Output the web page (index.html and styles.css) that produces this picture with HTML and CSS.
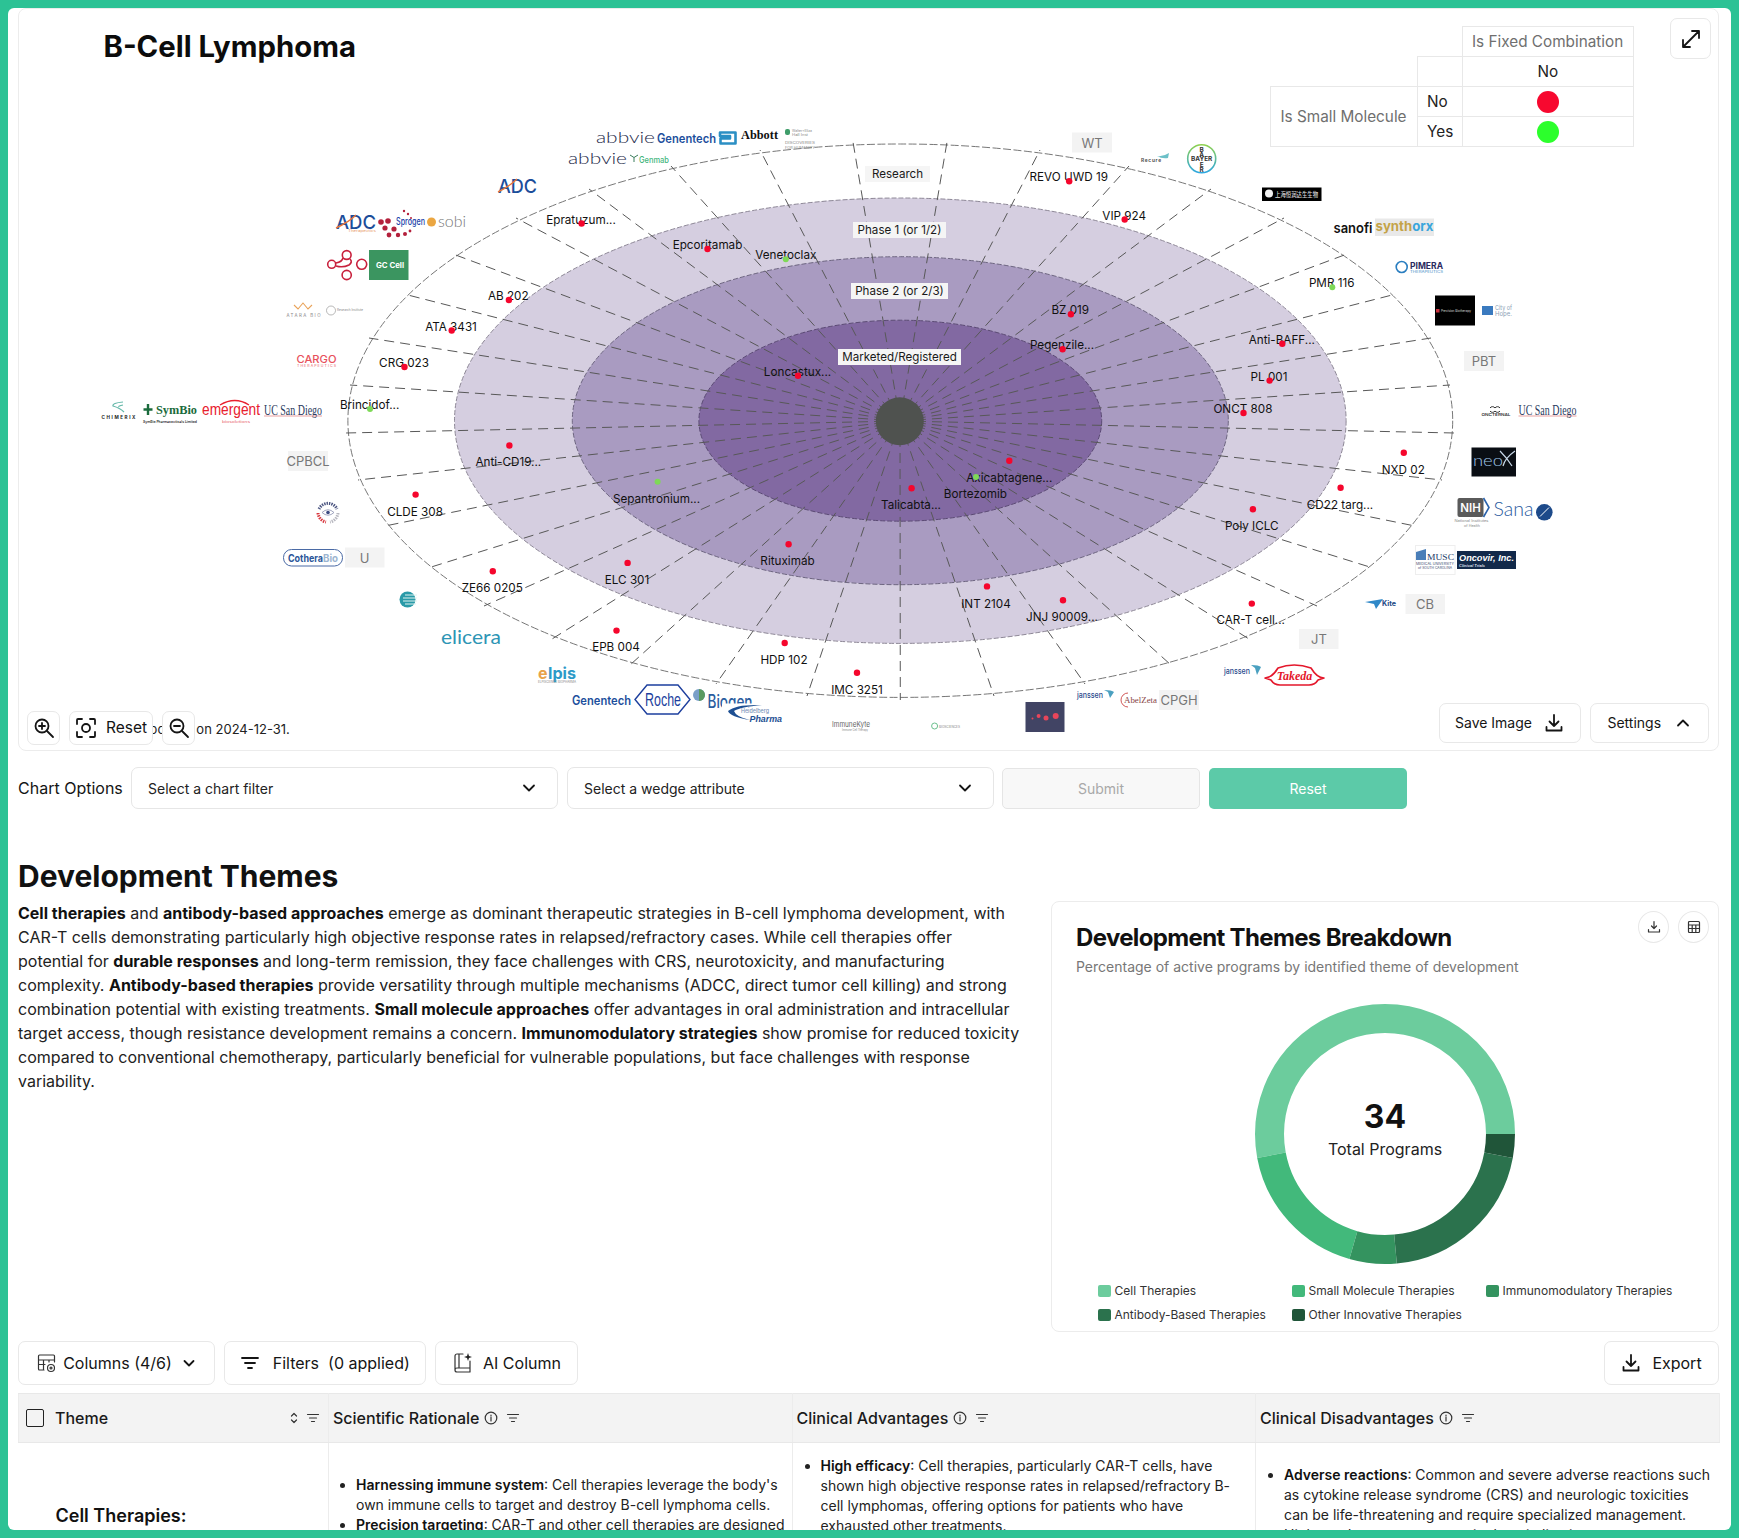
FILE: index.html
```html
<!DOCTYPE html>
<html lang="en">
<head>
<meta charset="utf-8">
<title>B-Cell Lymphoma</title>
<link rel="stylesheet" href="styles.css">
</head>
<body>
<div class="frame">
<main class="main">

<section class="chart-card">
  <svg class="chart" viewBox="19 9 1699 741" width="1699" height="741" xmlns="http://www.w3.org/2000/svg">
    <defs>
      <linearGradient id="bayer" x1="0" y1="0" x2="0" y2="1"><stop offset="0" stop-color="#8fd14f"/><stop offset="1" stop-color="#2ea7e0"/></linearGradient>
    </defs>
    <text class="title" x="103.5" y="57">B-Cell Lymphoma</text>

    <ellipse class="ring ring-r" cx="900.3" cy="420.7" rx="552.4" ry="276.7"/>
    <ellipse class="ring ring-1" cx="900.3" cy="420.7" rx="445.8" ry="222.7"/>
    <ellipse class="ring ring-2" cx="900.3" cy="420.7" rx="328" ry="164"/>
    <ellipse class="ring ring-3" cx="900.3" cy="420.7" rx="201.4" ry="100.5"/>
    <path class="spokes" d="M900 421L900.3 700M900 421L807 696M900 421L716 684M900 421L630 665M900 421L552 639M900 421L484 606M900 421L428 568M900 421L385 526M900 421L358 480M900 421L346 433M900 421L350 385M900 421L369 338M900 421L404 294M900 421L453 254M900 421L516 218M900 421L589 189M900 421L671 166M900 421L760 150M900 421L853 142M900 421L947 142M900 421L1040 150M900 421L1129 166M900 421L1211 189M900 421L1284 218M900 421L1347 254M900 421L1396 294M900 421L1431 338M900 421L1450 385M900 421L1454 433M900 421L1442 480M900 421L1415 526M900 421L1373 568M900 421L1317 606M900 421L1249 639M900 421L1171 665M900 421L1085 684M900 421L994 696"/>
    <circle class="hub" cx="899.8" cy="421.3" r="24"/>

    <rect class="stage-bg" x="865" y="166" width="65" height="16"/>
    <text class="stage" x="897.5" y="174">Research</text>
    <rect class="stage-bg" x="853" y="222" width="93" height="16"/>
    <text class="stage" x="899.5" y="230">Phase 1 (or 1/2)</text>
    <rect class="stage-bg" x="851" y="283" width="97" height="16"/>
    <text class="stage" x="899.5" y="291">Phase 2 (or 2/3)</text>
    <rect class="stage-bg" x="838" y="349" width="123" height="16"/>
    <text class="stage" x="899.5" y="357">Marketed/Registered</text>

    <g class="wedges">
      <text x="581" y="219.5">Epratuzum...</text>
      <text x="707.5" y="244.6">Epcoritamab</text>
      <text x="785.8" y="255">Venetoclax</text>
      <text x="508.3" y="296">AB 202</text>
      <text x="451" y="326.6">ATA 3431</text>
      <text x="404" y="363">CRG 023</text>
      <text x="797.5" y="371.8">Loncastux...</text>
      <text x="369.6" y="405.2">Brincidof...</text>
      <text x="508.3" y="462">Anti-CD19...</text>
      <text x="656.5" y="498.5">Sepantronium...</text>
      <text x="415" y="511.8">CLDE 308</text>
      <text x="627" y="579.6">ELC 301</text>
      <text x="492.2" y="588.4">ZE66 0205</text>
      <text x="787.5" y="561.4">Rituximab</text>
      <text x="616" y="647.4">EPB 004</text>
      <text x="784" y="659.6">HDP 102</text>
      <text x="857" y="690">IMC 3251</text>
      <text x="1068.7" y="177.3">REVO UWD 19</text>
      <text x="1124.2" y="215.6">VIP 924</text>
      <text x="1331.7" y="283.4">PMR 116</text>
      <text x="1070.3" y="310.4">BZ 019</text>
      <text x="1062" y="345.3">Pegenzile...</text>
      <text x="1281.8" y="339.9">Anti-BAFF...</text>
      <text x="1269" y="376.7">PL 001</text>
      <text x="1242.9" y="409.1">ONCT 808</text>
      <text x="1403.3" y="469.5">NXD 02</text>
      <text x="1340" y="504.9">CD22 targ...</text>
      <text x="1251.8" y="526">Poly ICLC</text>
      <text x="1250.7" y="620.3">CAR-T cell...</text>
      <text x="1062" y="617.4">JNJ 90009...</text>
      <text x="986" y="603.6">INT 2104</text>
      <text x="1009.3" y="477.9">Axicabtagene...</text>
      <text x="975.4" y="493.6">Bortezomib</text>
      <text x="911" y="505.4">Talicabta...</text>
    </g>
    <g class="dots-red">
      <circle cx="581.6" cy="223.5" r="3.2"/><circle cx="707.5" cy="249" r="3.2"/><circle cx="508.9" cy="300" r="3.2"/><circle cx="451.7" cy="330.5" r="3.2"/><circle cx="404.5" cy="367" r="3.2"/><circle cx="798" cy="375.7" r="3.2"/><circle cx="509.4" cy="445.5" r="3.2"/><circle cx="415.6" cy="494.6" r="3.2"/><circle cx="627.6" cy="562.9" r="3.2"/><circle cx="492.8" cy="571.2" r="3.2"/><circle cx="788.6" cy="544.2" r="3.2"/><circle cx="616.5" cy="630.6" r="3.2"/><circle cx="784.7" cy="643" r="3.2"/><circle cx="857" cy="672.7" r="3.2"/><circle cx="1069.2" cy="181.2" r="3.2"/><circle cx="1124.7" cy="219.5" r="3.2"/><circle cx="1070.9" cy="314.3" r="3.2"/><circle cx="1062.6" cy="349.2" r="3.2"/><circle cx="1282.3" cy="343.8" r="3.2"/><circle cx="1269.6" cy="380.6" r="3.2"/><circle cx="1243.5" cy="413" r="3.2"/><circle cx="1403.8" cy="452.8" r="3.2"/><circle cx="1340.6" cy="487.7" r="3.2"/><circle cx="1252.9" cy="509.3" r="3.2"/><circle cx="1251.8" cy="603.6" r="3.2"/><circle cx="1063" cy="600.2" r="3.2"/><circle cx="987" cy="586.4" r="3.2"/><circle cx="1009.3" cy="460.7" r="3.2"/><circle cx="911.6" cy="488.2" r="3.2"/>
    </g>
    <g class="dots-green">
      <circle cx="785.8" cy="259.3" r="3"/><circle cx="370" cy="409" r="3"/><circle cx="657.6" cy="481.8" r="3"/><circle cx="1332.3" cy="287.3" r="3"/><circle cx="976" cy="476.9" r="3"/>
    </g>

    <!-- company tags -->
    <g class="tags">
      <rect x="1072" y="132.5" width="40" height="20"/><text x="1092" y="142.5">WT</text>
      <rect x="1464" y="351" width="40" height="20"/><text x="1484" y="361">PBT</text>
      <rect x="1405.5" y="594" width="39.5" height="20"/><text x="1425" y="604">CB</text>
      <rect x="1299" y="629" width="39.5" height="20"/><text x="1319" y="639">JT</text>
      <rect x="1159" y="690" width="40" height="20"/><text x="1179" y="700">CPGH</text>
      <rect x="288" y="451" width="40" height="20"/><text x="308" y="461">CPBCL</text>
      <rect x="345" y="547.5" width="39.5" height="20"/><text x="364.5" y="557.5">U</text>
    </g>

    <!-- logos, top -->
    <text class="lg abbvie" x="596" y="143" textLength="59" lengthAdjust="spacingAndGlyphs">abbvie</text>
    <text class="lg gene" x="657" y="142.5" textLength="59" lengthAdjust="spacingAndGlyphs">Genentech</text>
    <path class="abbott-mark" d="M720 132.5H735.5V143.5H720.5V138.5H730V136H720Z"/>
    <text class="lg abbott" x="741" y="138.5" textLength="37" lengthAdjust="spacingAndGlyphs">Abbott</text>
    <rect class="wehi-shield" x="785" y="129" width="5" height="6" rx="2"/>
    <text class="lg tiny grey" x="792" y="132" textLength="20" lengthAdjust="spacingAndGlyphs">Walter+Eliza</text>
    <text class="lg tiny grey" x="792" y="136" textLength="16" lengthAdjust="spacingAndGlyphs">Hall Inst</text>
    <text class="lg tiny grey" x="785" y="144" textLength="30" lengthAdjust="spacingAndGlyphs">DISCOVERIES</text>
    <text class="lg tiny grey" x="785" y="149" textLength="30" lengthAdjust="spacingAndGlyphs">FOR HUMANITY</text>
    <text class="lg abbvie" x="568" y="164" textLength="59" lengthAdjust="spacingAndGlyphs">abbvie</text>
    <path class="genmab-y" d="M630 155L634 157.5L638 155M634 157.5V162"/>
    <text class="lg genmab" x="639" y="163" textLength="30" lengthAdjust="spacingAndGlyphs">Genmab</text>

    <text class="lg adc" x="498" y="193" textLength="39" lengthAdjust="spacingAndGlyphs">ADC</text>
    <path class="swoosh-o" d="M498 192Q510 186 517 179"/>
    <text class="lg adc" x="336" y="229" textLength="40" lengthAdjust="spacingAndGlyphs">ADC</text>
    <path class="swoosh-o" d="M336 228Q349 222 356 215"/>
    <text class="lg tiny orange" x="348" y="232" textLength="28" lengthAdjust="spacingAndGlyphs">Therapeutics</text>

    <g class="red-dots-logo">
      <circle cx="381" cy="222" r="2.8"/><circle cx="388" cy="221" r="2.8"/><circle cx="385" cy="228" r="2.6"/><circle cx="394" cy="229" r="2.6"/><circle cx="389" cy="235" r="2.4"/><circle cx="398" cy="235" r="2.2"/><circle cx="405" cy="234" r="2"/><circle cx="410" cy="231" r="1.4"/><circle cx="404" cy="211" r="1.2"/><circle cx="408" cy="214" r="1.2"/><circle cx="411" cy="218" r="1"/>
    </g>
    <text class="lg sprogen" x="396" y="224.5" textLength="29" lengthAdjust="spacingAndGlyphs">Sprogen</text>
    <circle class="sobi-dot" cx="431.5" cy="222" r="4.5"/>
    <text class="lg sobi" x="438" y="227" textLength="28" lengthAdjust="spacingAndGlyphs">sobi</text>

    <g class="knot">
      <circle cx="361.7" cy="264.3" r="5"/><circle cx="346.7" cy="275" r="4.6"/><circle cx="346.7" cy="255" r="4.4"/><circle cx="331.7" cy="264.3" r="4"/><path d="M336 263Q342 262 343 258M336 266Q343 268 349 265Q353 262 350 259"/>
    </g>
    <rect class="gc-box" x="369" y="250" width="39.5" height="30"/>
    <text class="lg gc" x="390" y="268">GC Cell</text>

    <path class="atara" d="M294 305L298 309L303 303L308 309L312 305"/>
    <text class="lg tiny grey wide" x="286.5" y="316.5" textLength="34">ATARA BIO</text>
    <circle class="thin-circle" cx="331" cy="310.5" r="4.5"/>
    <text class="lg tiny grey" x="337" y="311" textLength="26" lengthAdjust="spacingAndGlyphs">Research Institute</text>
    <text class="lg cargo" x="296.5" y="363" textLength="40" lengthAdjust="spacingAndGlyphs">CARGO</text>
    <text class="lg tiny orange-red" x="297" y="366.5" textLength="39">THERAPEUTICS</text>

    <path class="chimerix-s" d="M123 402Q112 403 113 406Q120 408 124 412M123 405Q118 406 119 407"/>
    <text class="lg chimerix" x="101.5" y="419" textLength="34">CHIMERIX</text>
    <path class="symbio-mark" d="M148 404V415M143.5 409.5H152.5"/>
    <text class="lg symbio" x="156" y="414" textLength="41" lengthAdjust="spacingAndGlyphs">SymBio</text>
    <text class="lg tiny dark" x="143" y="423" textLength="54" lengthAdjust="spacingAndGlyphs">SymBio Pharmaceuticals Limited</text>
    <text class="lg emergent" x="202" y="415" textLength="58" lengthAdjust="spacingAndGlyphs">emergent</text>
    <path class="emergent-arc" d="M220 405Q235 396 249 405"/>
    <text class="lg tiny orange-red" x="222" y="423" textLength="28" lengthAdjust="spacingAndGlyphs">biosolutions</text>
    <text class="lg ucsd" x="264" y="415" textLength="58" lengthAdjust="spacingAndGlyphs">UC San Diego</text>
    <path class="ucsd-line" d="M264 416H322"/>

    <g class="eye">
      <path class="eye-top" d="M319 509A10 10 0 0 1 337 509"/>
      <path class="eye-left" d="M318 513A10 10 0 0 0 326 522"/>
      <path class="eye-right" d="M338 513A10 10 0 0 1 330 522"/>
      <path class="eye-lid" d="M322 512.5Q328 507 334 512.5Q328 518 322 512.5Z"/>
      <circle class="eye-in" cx="328" cy="512.5" r="1.8"/>
    </g>
    <rect class="cothera-pill" x="283.5" y="549.5" width="59" height="16.5" rx="8"/>
    <text class="lg cothera" x="288" y="561.5" textLength="35" lengthAdjust="spacingAndGlyphs">Cothera</text>
    <text class="lg cothera-b" x="323" y="561.5" textLength="15" lengthAdjust="spacingAndGlyphs">Bio</text>

    <circle class="teal-ball" cx="407.5" cy="599.5" r="8"/>
    <path class="teal-lines" d="M405 595H417M403 598H417M403 601H417M405 604H416"/>
    <text class="lg elicera" x="441" y="643.5" textLength="60" lengthAdjust="spacingAndGlyphs">elicera</text>
    <text class="lg elpis-e" x="538" y="678.5">e</text>
    <text class="lg elpis" x="548" y="678.5" textLength="28" lengthAdjust="spacingAndGlyphs">lpis</text>
    <text class="lg tiny grey" x="538" y="682.5" textLength="38" lengthAdjust="spacingAndGlyphs">ELPISCIENCE BIOPHARMA</text>

    <text class="lg gene" x="572" y="704.5" textLength="59" lengthAdjust="spacingAndGlyphs">Genentech</text>
    <path class="roche-hex" d="M635 699.5L647 685H678L690 699.5L678 714H647Z"/>
    <text class="lg roche" x="645" y="706" textLength="36" lengthAdjust="spacingAndGlyphs">Roche</text>
    <circle class="biogen-globe" cx="699" cy="695" r="6"/>
    <path class="biogen-in" d="M699 689a6 6 0 0 1 0 12z"/>
    <text class="lg biogen" x="707.5" y="708" textLength="45" lengthAdjust="spacingAndGlyphs">Biogen</text>
    <rect class="mask" x="722" y="703.5" width="62" height="22"/>
    <path class="hp-swoosh" d="M762 705Q736 704 728 711Q730 717 750 720Q736 717 734 711Q740 707 762 705Z"/>
    <text class="lg hp-top" x="741" y="713" textLength="28" lengthAdjust="spacingAndGlyphs">Heidelberg</text>
    <text class="lg hp" x="749.5" y="721.5" textLength="32.5" lengthAdjust="spacingAndGlyphs">Pharma</text>
    <text class="lg immune" x="832" y="727" textLength="38" lengthAdjust="spacingAndGlyphs">ImmuneKyte</text>
    <text class="lg tiny grey" x="842" y="731" textLength="26" lengthAdjust="spacingAndGlyphs">Immune Cell Therapy</text>
    <circle class="mini-ring" cx="934.6" cy="726" r="3"/>
    <text class="lg tiny grey" x="939" y="727.5" textLength="21" lengthAdjust="spacingAndGlyphs">BIOSCIENCES</text>
    <rect class="navy-box" x="1025.5" y="702" width="39" height="30"/>
    <g class="navy-dots"><circle cx="1032.5" cy="718.5" r="1"/><circle cx="1038.6" cy="716" r="2"/><circle cx="1046" cy="718" r="2.5"/><circle cx="1055.7" cy="716" r="3"/></g>
    <text class="lg janssen" x="1077" y="698" textLength="26" lengthAdjust="spacingAndGlyphs">janssen</text>
    <path class="jan-swoosh" d="M1104 690Q1112 690 1114 692L1110 698L1108 692Z"/>
    <path class="abel-arc" d="M1128 693A7 7 0 1 0 1128 707"/>
    <text class="lg abel" x="1124" y="703" textLength="33" lengthAdjust="spacingAndGlyphs">AbelZeta</text>
    <text class="lg janssen" x="1224" y="674" textLength="26" lengthAdjust="spacingAndGlyphs">janssen</text>
    <path class="jan-swoosh" d="M1251 665Q1259 665 1261 667L1257 675L1255 668Z"/>
    <path class="takeda-shape" d="M1265 678Q1272 678 1278 668Q1294 662 1311 668Q1317 678 1324 678L1318 680Q1315 685 1309 685H1280Q1274 685 1271 680Z"/>
    <text class="lg takeda" x="1294.5" y="680">Takeda</text>

    <path class="kite-wing" d="M1365 602L1383 599L1376 609L1374 604Z"/>
    <text class="lg kite" x="1382" y="606" textLength="14" lengthAdjust="spacingAndGlyphs">Kite</text>
    <rect class="musc-box" x="1415.5" y="545.5" width="39.5" height="29"/>
    <path class="musc-bld" d="M1416 552L1426 549V560H1416Z"/>
    <text class="lg musc" x="1427" y="560" textLength="27" lengthAdjust="spacingAndGlyphs">MUSC</text>
    <text class="lg tiny navy" x="1416" y="565" textLength="38" lengthAdjust="spacingAndGlyphs">MEDICAL UNIVERSITY</text>
    <text class="lg tiny navy" x="1418" y="569" textLength="34" lengthAdjust="spacingAndGlyphs">of SOUTH CAROLINA</text>
    <rect class="oncovir-box" x="1457" y="551" width="59" height="18"/>
    <text class="lg oncovir" x="1459" y="560.5" textLength="55" lengthAdjust="spacingAndGlyphs">Oncovir, Inc.</text>
    <text class="lg oncovir-s" x="1459" y="566.5" textLength="26" lengthAdjust="spacingAndGlyphs">Clinical Trials</text>

    <rect class="nih-box" x="1457.5" y="498" width="26" height="19" rx="2"/>
    <path class="nih-chev" d="M1483.5 498L1489 507.5L1483.5 517"/>
    <text class="lg nih" x="1470.5" y="512">NIH</text>
    <text class="lg tiny grey" x="1454.5" y="522" textLength="34" lengthAdjust="spacingAndGlyphs">National Institutes</text>
    <text class="lg tiny grey" x="1464" y="527" textLength="16" lengthAdjust="spacingAndGlyphs">of Health</text>
    <text class="lg sana" x="1493.5" y="516" textLength="40" lengthAdjust="spacingAndGlyphs">Sana</text>
    <circle class="sana-dot" cx="1544.3" cy="512.3" r="8.3"/>
    <path class="sana-needle" d="M1549 507.5L1540 516.5"/>
    <rect class="neox-box" x="1471.5" y="447.5" width="44.5" height="29"/>
    <text class="lg neox" x="1473" y="466" textLength="30" lengthAdjust="spacingAndGlyphs">neo</text>
    <path class="neox-x" d="M1500 451Q1507 458 1512 466M1515 451Q1505 458 1503 466"/>

    <path class="oct-loop" d="M1490 408a3 3 0 0 1 5 0a3 3 0 0 1 5 0M1490 411a3 3 0 0 0 5 0a3 3 0 0 0 5 0"/>
    <text class="lg tiny dark" x="1481.5" y="416" textLength="29" lengthAdjust="spacingAndGlyphs">ONCTERNAL</text>
    <text class="lg ucsd" x="1518.5" y="415" textLength="58" lengthAdjust="spacingAndGlyphs">UC San Diego</text>
    <path class="ucsd-line" d="M1518.5 416H1576.5"/>

    <rect class="cit-box" x="1482" y="306" width="11" height="9"/>
    <text class="lg city" x="1495" y="310" textLength="17" lengthAdjust="spacingAndGlyphs">City of</text>
    <text class="lg city" x="1495" y="315.5" textLength="17" lengthAdjust="spacingAndGlyphs">Hope.</text>
    <rect class="black-box" x="1435" y="295.5" width="40" height="30"/>
    <rect class="red-sq" x="1436" y="309" width="3.5" height="3.5"/>
    <text class="lg tiny white" x="1441" y="312" textLength="30" lengthAdjust="spacingAndGlyphs">Precision Biotherapy</text>

    <circle class="pim-ring" cx="1401.7" cy="267" r="5.5"/>
    <text class="lg pimera" x="1410" y="269" textLength="33" lengthAdjust="spacingAndGlyphs">PIMERA</text>
    <text class="lg tiny blue" x="1410" y="273" textLength="33" lengthAdjust="spacingAndGlyphs">THERAPEUTICS</text>
    <text class="lg sanofi" x="1333.5" y="232.5" textLength="39" lengthAdjust="spacingAndGlyphs">sanofi</text>
    <rect class="syn-box" x="1375" y="218.5" width="59" height="17.5"/>
    <text class="lg synth" x="1375.5" y="231" textLength="58" lengthAdjust="spacingAndGlyphs">synth<tspan class="syn-b">orx</tspan></text>

    <rect class="black-box" x="1262" y="187.5" width="59.5" height="13.5"/>
    <circle class="white-dot" cx="1269" cy="193.5" r="4"/>
    <text class="lg cjk" x="1275" y="197" textLength="43" lengthAdjust="spacingAndGlyphs">上海恒润达生生物</text>

    <circle class="bayer-ring" cx="1201.7" cy="158.7" r="14"/>
    <text class="lg bayer" x="1201.7" y="161.2">BAYER</text>
    <text class="lg bayer" x="1201.7" y="151.5">B</text>
    <text class="lg bayer" x="1201.7" y="156.5">A</text>
    <text class="lg bayer" x="1201.7" y="166.5">E</text>
    <text class="lg bayer" x="1201.7" y="171.8">R</text>
    <text class="lg recure" x="1141" y="161.5" textLength="20">Recure</text>
    <path class="rec-sw" d="M1157 156Q1163 157 1169 153L1168 158Q1162 159 1157 156Z"/>
  </svg>

  <table class="legend">
    <colgroup><col class="legend-c1"><col class="legend-c2"><col class="legend-c3"></colgroup>
    <tr><td class="blank" colspan="2"></td><th class="muted">Is Fixed Combination</th></tr>
    <tr><td class="blank"></td><td></td><td class="center">No</td></tr>
    <tr><th class="muted" rowspan="2">Is Small Molecule</th><td>No</td><td class="center"><span class="legend-dot red"></span></td></tr>
    <tr><td>Yes</td><td class="center"><span class="legend-dot green"></span></td></tr>
  </table>

  <button class="btn expand" aria-label="Expand">
    <svg width="24" height="24" viewBox="0 0 24 24" class="ic"><path d="M4 20L20 4M13 4H20V11M4 13V20H11"/></svg>
  </button>

  <p class="source">Data procured on 2024-12-31.</p>
  <div class="zoom-controls">
    <button class="btn zoom-btn" aria-label="Zoom in"><svg width="22" height="22" viewBox="0 0 22 22" class="ic"><circle cx="9" cy="9" r="6.5"/><path d="M14 14L20 20M9 6V12M6 9H12"/></svg></button>
    <button class="btn reset-btn"><svg width="22" height="22" viewBox="0 0 22 22" class="ic"><path d="M2 7V3a1 1 0 0 1 1-1H7M15 2H19a1 1 0 0 1 1 1V7M20 15V19a1 1 0 0 1-1 1H15M7 20H3a1 1 0 0 1-1-1V15"/><circle cx="11" cy="11" r="4"/></svg>Reset</button>
    <button class="btn zoom-btn" aria-label="Zoom out"><svg width="22" height="22" viewBox="0 0 22 22" class="ic"><circle cx="9" cy="9" r="6.5"/><path d="M14 14L20 20M6 9H12"/></svg></button>
  </div>
  <div class="chart-actions">
    <button class="btn action save">Save Image<svg width="20" height="20" viewBox="0 0 20 20" class="ic"><path d="M10 2V13M5.5 8.5L10 13L14.5 8.5M2.5 14V17.5H17.5V14"/></svg></button>
    <button class="btn action settings">Settings<svg width="16" height="16" viewBox="0 0 16 16" class="ic"><path d="M3 10.5L8 5.5L13 10.5"/></svg></button>
  </div>
</section>

<section class="options">
  <span class="options-label">Chart Options</span>
  <div class="select"><span>Select a chart filter</span><svg width="16" height="16" viewBox="0 0 16 16" class="ic"><path d="M3 5.5L8 10.5L13 5.5"/></svg></div>
  <div class="select"><span>Select a wedge attribute</span><svg width="16" height="16" viewBox="0 0 16 16" class="ic"><path d="M3 5.5L8 10.5L13 5.5"/></svg></div>
  <button class="opt-btn submit">Submit</button>
  <button class="opt-btn apply">Reset</button>
</section>

<h1 class="section-title">Development Themes</h1>

<section class="themes">
  <p class="themes-text"><b>Cell therapies</b> and <b>antibody-based approaches</b> emerge as dominant therapeutic strategies in B-cell lymphoma development, with CAR-T cells demonstrating particularly high objective response rates in relapsed/refractory cases. While cell therapies offer potential for <b>durable responses</b> and long-term remission, they face challenges with CRS, neurotoxicity, and manufacturing complexity. <b>Antibody-based therapies</b> provide versatility through multiple mechanisms (ADCC, direct tumor cell killing) and strong combination potential with existing treatments. <b>Small molecule approaches</b> offer advantages in oral administration and intracellular target access, though resistance development remains a concern. <b>Immunomodulatory strategies</b> show promise for reduced toxicity compared to conventional chemotherapy, particularly beneficial for vulnerable populations, but face challenges with response variability.</p>

  <aside class="breakdown">
    <div class="round-actions">
      <button class="round" aria-label="Download"><svg width="14" height="14" viewBox="0 0 14 14" class="ic thin"><path d="M7 1.5V8.5M4.5 6L7 8.5L9.5 6M1.5 9.5V12H12.5V9.5"/></svg></button>
      <button class="round" aria-label="Table"><svg width="14" height="14" viewBox="0 0 14 14" class="ic thin"><rect x="1.5" y="1.5" width="11" height="11" rx="1"/><path d="M1.5 5H12.5M1.5 8.5H12.5M5.2 5V12.5M8.8 5V12.5"/></svg></button>
    </div>
    <h2 class="breakdown-title">Development Themes Breakdown</h2>
    <p class="breakdown-sub">Percentage of active programs by identified theme of development</p>
    <div class="donut">
      <svg width="260" height="260" viewBox="-130 -130 260 260" xmlns="http://www.w3.org/2000/svg">
        <g transform="scale(1,-1)" fill="none" stroke-width="29">
          <circle r="115.5" pathLength="34" stroke="#6ccc9d" stroke-dasharray="18 16"/>
          <circle r="115.5" pathLength="34" stroke="#42b97b" stroke-dasharray="6 28" stroke-dashoffset="-18"/>
          <circle r="115.5" pathLength="34" stroke="#34935f" stroke-dasharray="2 32" stroke-dashoffset="-24"/>
          <circle r="115.5" pathLength="34" stroke="#2b724d" stroke-dasharray="7 27" stroke-dashoffset="-26"/>
          <circle r="115.5" pathLength="34" stroke="#205539" stroke-dasharray="1 33" stroke-dashoffset="-33"/>
        </g>
      </svg>
      <div class="donut-center"><strong>34</strong><span>Total Programs</span></div>
    </div>
    <ul class="donut-legend">
      <li><i class="sw sw1"></i>Cell Therapies</li>
      <li><i class="sw sw2"></i>Small Molecule Therapies</li>
      <li><i class="sw sw3"></i>Immunomodulatory Therapies</li>
      <li><i class="sw sw4"></i>Antibody-Based Therapies</li>
      <li><i class="sw sw5"></i>Other Innovative Therapies</li>
    </ul>
  </aside>
</section>

<section class="toolbar">
  <button class="btn tool w-col"><svg width="22" height="22" viewBox="0 0 22 22" class="ic thin"><path d="M8 18H3.5a1 1 0 0 1-1-1V4a1 1 0 0 1 1-1h14a1 1 0 0 1 1 1v6M2.5 8H18.5M2.5 12.5H9M7.5 8V18M13 8V10"/><circle cx="15" cy="16" r="3.5"/><circle cx="15" cy="16" r="1"/></svg>Columns (4/6)<svg class="ic caret" width="16" height="16" viewBox="0 0 16 16"><path d="M3.5 6L8 10.5L12.5 6"/></svg></button>
  <button class="btn tool w-fil"><svg width="20" height="20" viewBox="0 0 20 20" class="ic"><path d="M2 5H18M5 10H15M8 15H12"/></svg>Filters&nbsp; (0 applied)</button>
  <button class="btn tool w-ai"><svg width="22" height="22" viewBox="0 0 22 22" class="ic thin"><path d="M12 2H6a2 2 0 0 0-2 2V18a2 2 0 0 0 2 2H19V9M4 18a2 2 0 0 1 2-2H19M8 2V16"/><path class="fill-k" d="M17 1L18 4L21 5L18 6L17 9L16 6L13 5L16 4Z"/></svg>AI Column</button>
  <span class="tool-spacer"></span>
  <button class="btn tool w-exp"><svg width="20" height="20" viewBox="0 0 20 20" class="ic"><path d="M10 2V13M5.5 8.5L10 13L14.5 8.5M2.5 14V17.5H17.5V14"/></svg>Export</button>
</section>

<table class="data">
  <colgroup><col class="dc1"><col class="dc2"><col class="dc3"><col class="dc4"></colgroup>
  <thead>
    <tr>
      <th><div class="th-in first"><span class="check"></span><span class="th-theme">Theme</span><span class="grow"></span>
        <svg width="10" height="14" viewBox="0 0 10 14" class="ic thin"><path d="M2.5 5L5 2.5L7.5 5M2.5 9L5 11.5L7.5 9"/></svg>
        <svg width="14" height="14" viewBox="0 0 14 14" class="ic thin"><path d="M1.5 3.5H12.5M3.5 7H10.5M5.5 10.5H8.5"/></svg></div></th>
      <th><div class="th-in tight">Scientific Rationale<svg width="14" height="14" viewBox="0 0 14 14" class="ic thin"><circle cx="7" cy="7" r="5.8"/><path d="M7 6.2V10M7 4V4.8"/></svg><svg width="14" height="14" viewBox="0 0 14 14" class="ic thin"><path d="M1.5 3.5H12.5M3.5 7H10.5M5.5 10.5H8.5"/></svg></div></th>
      <th><div class="th-in tight">Clinical Advantages<svg width="14" height="14" viewBox="0 0 14 14" class="ic thin"><circle cx="7" cy="7" r="5.8"/><path d="M7 6.2V10M7 4V4.8"/></svg><svg width="14" height="14" viewBox="0 0 14 14" class="ic thin"><path d="M1.5 3.5H12.5M3.5 7H10.5M5.5 10.5H8.5"/></svg></div></th>
      <th><div class="th-in tight">Clinical Disadvantages<svg width="14" height="14" viewBox="0 0 14 14" class="ic thin"><circle cx="7" cy="7" r="5.8"/><path d="M7 6.2V10M7 4V4.8"/></svg><svg width="14" height="14" viewBox="0 0 14 14" class="ic thin"><path d="M1.5 3.5H12.5M3.5 7H10.5M5.5 10.5H8.5"/></svg></div></th>
    </tr>
  </thead>
  <tbody>
    <tr>
      <td class="theme-cell">Cell Therapies:</td>
      <td class="rationale"><ul>
        <li><b>Harnessing immune system</b>: Cell therapies leverage the body's own immune cells to target and destroy B-cell lymphoma cells.</li>
        <li><b>Precision targeting</b>: CAR-T and other cell therapies are designed to recognise specific antigens.</li>
      </ul></td>
      <td class="advantages"><ul>
        <li><b>High efficacy</b>: Cell therapies, particularly CAR-T cells, have shown high objective response rates in relapsed/refractory B-cell lymphomas, offering options for patients who have exhausted other treatments.</li>
      </ul></td>
      <td class="disadvantages"><ul>
        <li><b>Adverse reactions</b>: Common and severe adverse reactions such as cytokine release syndrome (CRS) and neurologic toxicities can be life-threatening and require specialized management. High-grade events may require hospitalization.</li>
      </ul></td>
    </tr>
  </tbody>
</table>

</main>
</div>
</body>
</html>
```

FILE: styles.css
```css
* { box-sizing: border-box; }
html, body { margin: 0; padding: 0; height: 100%; }
body {
  background: #2cc295;
  padding: 8px;
  overflow: hidden;
  font-family: Inter, "Liberation Sans", sans-serif;
  color: #151515;
}
.frame {
  background: #fff;
  border-radius: 6px;
  height: 1522px;
  overflow: hidden;
}
.main { padding: 0 12px 0 10px; }

/* shared */
.btn {
  font: 400 14px Inter, sans-serif;
  color: #151515;
  background: #fff;
  border: 1px solid #e8e8e8;
  border-radius: 7px;
  display: flex;
  align-items: center;
  justify-content: center;
  padding: 0;
}
.ic { fill: none; stroke: #151515; stroke-width: 1.8; stroke-linecap: round; stroke-linejoin: round; flex: none; }
.ic.thin { stroke-width: 1.2; stroke: #333; }
.fill-k { fill: #222; stroke: none; }

/* chart card */
.chart-card {
  position: relative;
  height: 743px;
  border: 1px solid #ececec;
  border-radius: 8px;
}
.chart { display: block; }
.title { font: 700 29.3px Inter, sans-serif; fill: #0c0c0c; }

.ring { stroke-width: 1; stroke-dasharray: 5 2; }
.ring-r { fill: #fff; stroke: #777; stroke-dasharray: 8 2.5; }
.ring-1 { fill: #d5cee0; stroke: #8d8796; }
.ring-2 { fill: #a99bc1; stroke: #6d6580; }
.ring-3 { fill: #8269a2; stroke: #5b4a74; }
.spokes { fill: none; stroke: #585858; stroke-width: 1; stroke-dasharray: 10 6; stroke-dashoffset: 0; }
.hub { fill: #4f524f; }
.stage-bg { fill: #f5f5f5; }
.stage { font: 400 11.6px Inter, sans-serif; fill: #1a1a1a; text-anchor: middle; dominant-baseline: central; }
.wedges text { font: 400 11.7px Inter, sans-serif; fill: #111; text-anchor: middle; dominant-baseline: central; }
.dots-red circle { fill: #f5062d; }
.dots-green circle { fill: #7ed957; }
.tags rect { fill: #f3f3f3; }
.tags text { font: 400 13px Inter, sans-serif; fill: #777; text-anchor: middle; dominant-baseline: central; }

/* logos */
.lg { font-family: Inter, sans-serif; }
.tiny { font-size: 3.6px; }
.tiny.grey { fill: #888; }
.tiny.dark { fill: #333; font-weight: 600; }
.tiny.orange { fill: #e89a6a; }
.tiny.orange-red { fill: #e8606a; }
.tiny.navy { fill: #3a4a70; }
.tiny.blue { fill: #4a90c8; }
.tiny.white { fill: #ddd; }
.abbvie { font: 300 15px Lato, sans-serif; fill: #1e2a4a; }
.gene { font: 600 12.5px Inter, sans-serif; fill: #1c4f9c; }
.abbott-mark { fill: none; stroke: #2b8fc4; stroke-width: 2.6; stroke-linejoin: round; }
.abbott { font: 700 12.5px "Liberation Serif", serif; fill: #111; }
.wehi-shield { fill: #3f9d6a; }
.genmab-y { fill: none; stroke: #3a7d5c; stroke-width: 1; }
.genmab { font: 500 9px Inter, sans-serif; fill: #3fb57c; }
.adc { font: 500 19px Inter, sans-serif; fill: #1b4d9a; }
.swoosh-o { fill: none; stroke: #e8763a; stroke-width: 1.4; }
.red-dots-logo circle { fill: #b4203c; }
.sprogen { font: 500 10px Inter, sans-serif; fill: #2244aa; }
.sobi-dot { fill: #eba641; }
.sobi { font: 300 16px Lato, sans-serif; fill: #777; }
.knot circle, .knot path { fill: none; stroke: #c8203c; stroke-width: 1.6; }
.gc-box { fill: #3b9560; }
.gc { font: 700 7.8px Inter, sans-serif; fill: #fff; text-anchor: middle; }
.atara { fill: none; stroke: #e9a35a; stroke-width: 1.1; }
.wide { font-size: 4.4px; }
.thin-circle { fill: none; stroke: #999; stroke-width: .7; }
.cargo { font: 500 10.5px Inter, sans-serif; fill: #e8505b; }
.chimerix-s { fill: none; stroke: #63b7a8; stroke-width: 1.2; }
.chimerix { font: 700 4.6px Inter, sans-serif; fill: #222; }
.symbio-mark { fill: none; stroke: #1a6b3c; stroke-width: 2.4; }
.symbio { font: 700 13.5px "Liberation Serif", serif; fill: #1a6b3c; }
.emergent { font: 400 17px "Liberation Sans", sans-serif; fill: #e8202e; }
.emergent-arc { fill: none; stroke: #e8202e; stroke-width: 1.4; }
.ucsd { font: 400 15px "Liberation Serif", serif; fill: #2a3a5e; }
.ucsd-line { fill: none; stroke: #e07a7a; stroke-width: .7; }
.eye path { fill: none; stroke-width: 3; stroke-dasharray: 1.4 1; }
.eye .eye-top { stroke: #4a5480; }
.eye .eye-left { stroke: #d8383f; }
.eye .eye-right { stroke: #b8b8c0; }
.eye .eye-lid { stroke: #8a90b0; stroke-width: .8; stroke-dasharray: none; }
.eye .eye-in { fill: #3a4a80; }
.cothera-pill { fill: #fff; stroke: #4a6aa5; stroke-width: 1; }
.cothera { font: 700 10.5px Inter, sans-serif; fill: #2a5599; }
.cothera-b { font: 700 10.5px Inter, sans-serif; fill: #9db5d0; }
.teal-ball { fill: #2a9aa8; }
.teal-lines { fill: none; stroke: #dff3f0; stroke-width: 1; }
.elicera { font: 400 19px Lato, sans-serif; fill: #2d95b5; }
.elpis-e { font: 700 16px Inter, sans-serif; fill: #e8a24a; }
.elpis { font: 700 16px Inter, sans-serif; fill: #2d9ac8; }
.roche-hex { fill: #fff; stroke: #1d3f9e; stroke-width: 1.4; }
.roche { font: 400 19px "Liberation Sans", sans-serif; fill: #1d3f9e; }
.biogen-globe { fill: #7a9fc8; }
.biogen-in { fill: #5a9a60; }
.biogen { font: 500 18px Inter, sans-serif; fill: #2a5c9e; }
.mask { fill: #fff; }
.hp-swoosh { fill: #1d4f92; }
.hp-top { font: 500 5.5px Inter, sans-serif; fill: #7b93b8; }
.hp { font: italic 700 9.5px "Liberation Sans", sans-serif; fill: #1d4f92; }
.immune { font: 400 7.6px Inter, sans-serif; fill: #666; }
.mini-ring { fill: none; stroke: #6cc08e; stroke-width: 1; }
.navy-box { fill: #414464; }
.navy-dots circle { fill: #e8455a; }
.janssen { font: 500 8.6px Inter, sans-serif; fill: #2a4a8c; }
.jan-swoosh { fill: #4aa0c0; }
.abel-arc { fill: none; stroke: #c44; stroke-width: .9; }
.abel { font: 400 8px "Liberation Serif", serif; fill: #844; }
.takeda-shape { fill: #fff; stroke: #e4172b; stroke-width: 1.6; stroke-linejoin: round; }
.takeda { font: italic 700 12px "Liberation Serif", serif; fill: #e4172b; text-anchor: middle; }
.kite-wing { fill: #2f88c8; }
.kite { font: 700 7px Inter, sans-serif; fill: #234a86; }
.musc-box { fill: #fff; stroke: #eee; stroke-width: 1; }
.musc-bld { fill: #4a7eb8; }
.musc { font: 400 7.5px "Liberation Serif", serif; fill: #223a66; }
.oncovir-box { fill: #12294a; }
.oncovir { font: italic 700 8.5px "Liberation Sans", sans-serif; fill: #fff; }
.oncovir-s { font: italic 700 4px "Liberation Sans", sans-serif; fill: #d8dfe8; }
.nih-box { fill: #5a5a5a; }
.nih-chev { fill: none; stroke: #2a62ac; stroke-width: 1.6; }
.nih { font: 600 11.5px Inter, sans-serif; fill: #fff; text-anchor: middle; }
.sana { font: 300 19px Lato, sans-serif; fill: #2a5aa0; }
.sana-dot { fill: #1d4a8a; }
.sana-needle { fill: none; stroke: #fff; stroke-width: 1; }
.neox-box { fill: #0a0e14; }
.neox { font: 300 15px Lato, sans-serif; fill: #9fc4e8; }
.neox-x { fill: none; stroke: #c8d8e8; stroke-width: 1.2; }
.oct-loop { fill: none; stroke: #333; stroke-width: 1; }
.cit-box { fill: #3a7abf; }
.city { font: 400 6.5px Inter, sans-serif; fill: #8aa0b4; }
.black-box { fill: #000; }
.red-sq { fill: #c8303c; }
.pim-ring { fill: none; stroke: #2a7ec0; stroke-width: 1.6; }
.pimera { font: 700 8.4px Inter, sans-serif; fill: #2a2a5e; }
.sanofi { font: 600 14px Inter, sans-serif; fill: #111; }
.syn-box { fill: #e9e9e9; }
.synth { font: 700 13px Inter, sans-serif; fill: #c4a348; }
.syn-b { fill: #3aa6dc; }
.white-dot { fill: #f2f2f2; }
.cjk { font: 500 6.5px "Noto Sans CJK SC", sans-serif; fill: #ddd; }
.bayer-ring { fill: #fff; stroke: url(#bayer); stroke-width: 1.6; }
.bayer { font: 700 6.4px Inter, sans-serif; fill: #333; text-anchor: middle; }
.recure { font: 700 4.8px Inter, sans-serif; fill: #555; }
.rec-sw { fill: #6cc0c8; }

/* legend table */
.legend {
  position: absolute;
  left: 1251px;
  top: 17px;
  border-collapse: collapse;
  table-layout: fixed;
  width: 363px;
  font-size: 15.3px;
}
.legend-c1 { width: 146.5px; }
.legend-c2 { width: 45px; }
.legend-c3 { width: 171.5px; }
.legend tr { height: 30px; }
.legend th, .legend td { border: 1.5px solid #e8e8e8; padding: 0 9px 0 9.5px; font-weight: 400; color: #222; background: #fff; text-align: left; }
.legend td.blank { border: none; background: transparent; }
.legend th.muted { color: #6f6f6f; }
.legend td.center { text-align: center; padding: 0; line-height: 0; }
.legend td.center:not(:has(span)) { line-height: normal; }
.legend-dot { display: inline-block; width: 22px; height: 22px; border-radius: 50%; vertical-align: middle; }
.legend-dot.red { background: #f7082f; }
.legend-dot.green { background: #2cff2c; }

.expand { position: absolute; left: 1651px; top: 9px; width: 41px; height: 41px; }

.source { position: absolute; left: 86px; top: 712px; margin: 0; font-size: 13px; line-height: 16px; white-space: nowrap; color: #222; }
.zoom-controls { position: absolute; left: 8px; top: 702px; display: flex; gap: 9px; }
.zoom-btn { width: 33px; height: 33.5px; }
.reset-btn { width: 84px; height: 33.5px; gap: 9px; font-size: 15.5px; }
.chart-actions { position: absolute; right: 9px; top: 694px; display: flex; gap: 9px; }
.action { height: 39.5px; }
.save { width: 142px; gap: 12px; }
.settings { width: 119.5px; gap: 14px; }

/* options */
.options { display: flex; align-items: center; margin-top: 16px; height: 42px; }
.options-label { font-size: 16px; width: 113px; flex: none; }
.select {
  width: 427px;
  height: 42px;
  margin-right: 9px;
  border: 1px solid #e6e6e6;
  border-radius: 7px;
  display: flex;
  align-items: center;
  justify-content: space-between;
  padding: 0 20px 0 16px;
  font-size: 14px;
  color: #222;
}
.select + .select { margin-right: 8px; }
.opt-btn { width: 198px; height: 41px; margin-right: 9px; border-radius: 5px; font: 400 14px Inter, sans-serif; }
.submit { background: #f8f8f8; border: 1px solid #e5e5e5; color: #a8a8a8; }
.apply { background: #5ccaa8; border: 0; color: #fff; }

.section-title { margin: 49px 0 7px; font-size: 30px; line-height: 36px; font-weight: 700; color: #111; }

/* themes */
.themes { display: flex; justify-content: space-between; align-items: flex-start; }
.themes-text { margin: 0; width: 1002.5px; font-size: 16px; line-height: 24px; color: #222; }
.themes-text b { font-weight: 700; color: #111; }
.breakdown {
  position: relative;
  width: 668px;
  height: 431px;
  border: 1px solid #ececec;
  border-radius: 8px;
  padding: 22px 24px 0;
}
.round-actions { position: absolute; right: 9px; top: 9px; display: flex; gap: 9px; }
.round { width: 31px; height: 32px; border-radius: 50%; border: 1px solid #e8e8e8; background: #fff; padding: 0; display: flex; align-items: center; justify-content: center; }
.breakdown-title { margin: 0; font-size: 24px; line-height: 28px; font-weight: 700; letter-spacing: -.65px; color: #111; }
.breakdown-sub { margin: 5px 0 0; font-size: 14px; line-height: 20px; color: #777; }
.donut { position: relative; width: 260px; height: 260px; margin: 27px auto 0; }
.donut svg { display: block; }
.donut-center { position: absolute; inset: 0; display: flex; flex-direction: column; align-items: center; justify-content: center; padding-bottom: 11px; }
.donut-center strong { font-size: 32px; line-height: 40px; font-weight: 700; color: #111; }
.donut-center span { font-size: 16px; line-height: 24px; color: #222; }
.donut-legend {
  list-style: none;
  margin: 15px 0 0;
  padding: 0 0 0 22px;
  display: grid;
  grid-template-columns: repeat(3, 194px);
  row-gap: 0;
}
.donut-legend li { display: flex; align-items: center; gap: 4px; font-size: 12px; line-height: 24px; color: #333; }
.sw { width: 12.5px; height: 12.5px; border-radius: 2px; flex: none; }
.sw1 { background: #6ccc9d; }
.sw2 { background: #42b97b; }
.sw3 { background: #34935f; }
.sw4 { background: #2b724d; }
.sw5 { background: #205539; }

/* toolbar */
.toolbar { display: flex; gap: 9px; margin-top: 9px; height: 44px; }
.tool { font-size: 16px; height: 44px; gap: 5px; }
.w-col { width: 197px; }
.caret { margin-left: 4px; }
.w-fil { width: 201.5px; gap: 13px; }
.w-ai { width: 143px; gap: 10px; }
.w-exp { width: 115px; gap: 11px; }
.tool-spacer { flex: 1; }

/* data table */
.data { width: 1701px; margin-top: 8px; border-collapse: collapse; table-layout: fixed; }
.dc1 { width: 310px; }
.dc2 { width: 463.5px; }
.dc3 { width: 463.5px; }
.dc4 { width: 464px; }
.data th { background: #f3f3f3; height: 49px; padding: 0 4px; font-size: 16px; font-weight: 500; text-align: left; border: 1px solid #e8e8e8; border-left-color: #ececec; border-right-color: #ececec; color: #1a1a1a; }
.th-in { display: flex; align-items: center; }
.th-in.first { padding-right: 4px; }
.th-in.tight { gap: 5px; }
.th-in.tight svg + svg { margin-left: 3px; }
.check { width: 18px; height: 18px; border: 1.6px solid #222; border-radius: 2px; margin-left: 3px; }
.th-theme { margin-left: 11px; }
.grow { flex: 1; }
.th-in svg + svg { margin-left: 7px; }
.data td { vertical-align: top; border-right: 1px solid #ececec; font-size: 14px; line-height: 20px; color: #222; }
.data td:last-child { border-right: 0; }
.data td b { font-weight: 600; color: #111; }
.data ul { margin: 0; padding: 0 0 0 28px; }
.data li { margin: 0; }
.theme-cell { padding: 61px 0 0 37px; font-size: 18px !important; line-height: 24px !important; font-weight: 600; color: #111 !important; }
.rationale { padding: 32px 6px 0 0; }
.rationale ul { padding-left: 27px; }
.advantages { padding: 13px 24px 0 0; }
.disadvantages { padding: 22px 6px 0 0; }
```
